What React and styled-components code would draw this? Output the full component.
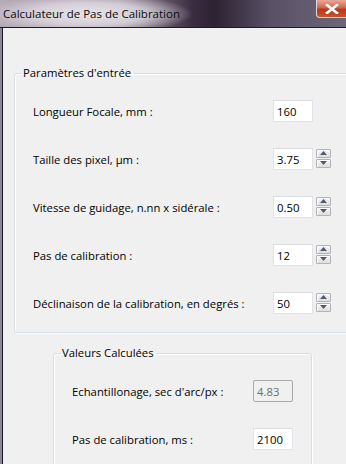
import styled, { createGlobalStyle } from "styled-components";

const GlobalStyle = createGlobalStyle`
  html, body {
    margin: 0;
    padding: 0;
    overflow: hidden;
    background: #f0f0f0;
  }
  body {
    font-family: "Open Sans", "Noto Sans", sans-serif;
    font-size: 11.3px;
    color: #000;
  }
`;

const inputs = [
  { label: "Longueur Focale, mm :", value: "160", spin: false },
  { label: "Taille des pixel, µm :", value: "3.75", spin: true },
  { label: "Vitesse de guidage, n.nn x sidérale :", value: "0.50", spin: true },
  { label: "Pas de calibration :", value: "12", spin: true },
  { label: "Déclinaison de la calibration, en degrés :", value: "50", spin: true },
];

const outputs = [
  { label: "Echantillonage, sec d'arc/px :", value: "4.83", disabled: true },
  { label: "Pas de calibration, ms :", value: "2100", disabled: false },
];

function Spinner() {
  return (
    <Spin>
      <SpinButton>
        <svg width="7" height="4" viewBox="0 0 7 4">
          <path d="M0 4 L3.5 0 L7 4 Z" fill="#4e5b73" />
        </svg>
      </SpinButton>
      <SpinButton>
        <svg width="7" height="4" viewBox="0 0 7 4">
          <path d="M0 0 L3.5 4 L7 0 Z" fill="#4e5b73" />
        </svg>
      </SpinButton>
    </Spin>
  );
}

export default function App() {
  return (
    <>
      <GlobalStyle />
      <Window>
        <TitleBar>
          <Title>Calculateur de Pas de Calibration</Title>
          <CloseButton>
            <svg width="14" height="10" viewBox="0 0 14 10">
              <path
                d="M2 1 L12 9 M12 1 L2 9"
                stroke="#fff"
                strokeWidth="2.6"
                strokeLinecap="square"
              />
            </svg>
          </CloseButton>
        </TitleBar>
        <Client>
          <Group $width={340}>
            <Legend>Paramètres d'entrée</Legend>
            <Rows>
              {inputs.map((row) => (
                <Row key={row.label} $labelWidth={237}>
                  <span>{row.label}</span>
                  <TextBox readOnly value={row.value} />
                  {row.spin && <Spinner />}
                </Row>
              ))}
            </Rows>
          </Group>
          <Group $width={259} $indent={39} $top={12}>
            <Legend>Valeurs Calculées</Legend>
            <Rows>
              {outputs.map((row) => (
                <Row key={row.label} $labelWidth={178}>
                  <span>{row.label}</span>
                  <TextBox readOnly value={row.value} $disabled={row.disabled} />
                </Row>
              ))}
            </Rows>
          </Group>
        </Client>
      </Window>
    </>
  );
}

const Window = styled.div`
  width: 346px;
  height: 464px;
  display: flex;
  flex-direction: column;
  background: #8c8596;
  overflow: hidden;
`;

const TitleBar = styled.div`
  height: 27px;
  flex-shrink: 0;
  display: flex;
  justify-content: space-between;
  align-items: flex-start;
  border-bottom: 1px solid #1d1a22;
  background:
    radial-gradient(ellipse 105px 20px at 88px 14px, rgba(236, 232, 236, 0.95) 0%, rgba(220, 214, 222, 0.85) 55%, rgba(200, 190, 200, 0) 100%),
    linear-gradient(90deg, #b4aab6 0%, #9e92a2 35%, #3a2c40 56%, #2c2232 62%, #5a5066 78%, #6c6678 100%);
`;

const Title = styled.div`
  padding: 6px 0 0 3px;
  font-size: 11.5px;
  line-height: 16px;
  color: #0a0a0a;
`;

const CloseButton = styled.div`
  width: 31px;
  height: 18px;
  margin-right: -1px;
  box-sizing: border-box;
  display: flex;
  align-items: center;
  justify-content: center;
  border: 1px solid #e8d6d2;
  border-top: none;
  border-radius: 0 0 0 4px;
  background: linear-gradient(180deg, #e9a99a 0%, #d0664e 45%, #b63a1d 55%, #c9522c 100%);
`;

const Client = styled.div`
  flex: 1;
  margin-left: 2px;
  border-left: 1px solid #1d1a22;
  background: #f0f0f0;
  padding-left: 11px;
  padding-top: 37px;
  display: flex;
  flex-direction: column;
  align-items: flex-start;
`;

const Group = styled.fieldset`
  width: ${(p) => p.$width}px;
  flex-shrink: 0;
  box-sizing: border-box;
  margin: ${(p) => p.$top || 0}px 0 0 ${(p) => p.$indent || 0}px;
  padding: 0 0 18px 18px;
  border: 1px solid #d5dfe5;
  border-radius: 3px;
  box-shadow: inset 1px 1px 0 #fff, 1px 1px 0 #fff;
`;

const Legend = styled.legend`
  margin-left: -11px;
  padding: 0 2px 0 1px;
  font-size: 11.3px;
  line-height: 16px;
`;

const Rows = styled.div`
  display: flex;
  flex-direction: column;
  gap: 26px;
  padding-top: 19px;
`;

const Row = styled.div`
  display: grid;
  grid-template-columns: ${(p) => p.$labelWidth}px 40px 15px;
  column-gap: 3px;
  align-items: center;
  height: 22px;
  white-space: nowrap;
`;

const TextBox = styled.input`
  width: 40px;
  height: 22px;
  box-sizing: border-box;
  margin: 0;
  padding: 1px 3px 0;
  font-family: inherit;
  font-size: 11.3px;
  color: ${(p) => (p.$disabled ? "#6d6d6d" : "#000")};
  background: ${(p) => (p.$disabled ? "#f0f0f0" : "#fff")};
  border: 1px solid ${(p) => (p.$disabled ? "#a9a9a9" : "#e2e3ea")};
  border-top-color: ${(p) => (p.$disabled ? "#a9a9a9" : "#dcdde2")};
  border-radius: ${(p) => (p.$disabled ? "2px" : "0")};
  outline: none;
`;

const Spin = styled.div`
  display: flex;
  flex-direction: column;
  gap: 1px;
  margin-top: -2px;
`;

const SpinButton = styled.div`
  width: 15px;
  height: 9px;
  box-sizing: border-box;
  display: flex;
  align-items: center;
  justify-content: center;
  border: 1px solid #b3b3b3;
  border-radius: 1px;
  background: linear-gradient(180deg, #f6f6f6 0%, #ebebeb 50%, #dedede 100%);
  box-shadow: inset 1px 1px 0 #fcfcfc;
`;
